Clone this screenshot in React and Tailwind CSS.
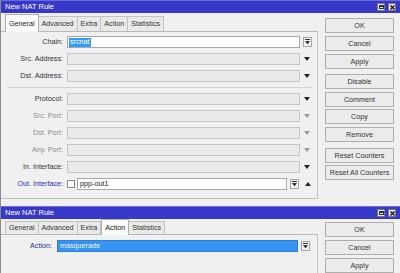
import React from 'react';

const Down = ({ color = '#222' }) => (
    <svg width="6" height="4" viewBox="0 0 6 4"><path d="M0 0h6L3 4z" fill={color} /></svg>
);

const Up = ({ color = '#222' }) => (
    <svg width="6" height="4" viewBox="0 0 6 4"><path d="M0 4h6L3 0z" fill={color} /></svg>
);

const DropBox = ({ className = '' }) => (
    <div className={`w-[9px] h-[10px] border border-[#a4a4a4] bg-[#f4f4f4] flex items-center justify-center ${className}`}>
        <svg width="5" height="6" viewBox="0 0 5 6"><path d="M0 0h5v1H0z M0 2h5L2.5 5.5z" fill="#333" /></svg>
    </div>
);

const TitleBar = () => (
    <div className="h-[13px] flex items-center justify-between bg-[#3838c8] border-t border-[#6b6bdc] pl-[4px] pr-[4px]">
        <span className="text-white text-[7.5px]">New NAT Rule</span>
        <div className="flex items-center gap-[3px]">
            <div className="w-[8px] h-[8px] bg-[#e4e4e4] border border-[#7a7a7a] flex items-center justify-center">
                <div className="w-[5px] h-[4px] border border-[#333] border-t-2"></div>
            </div>
            <div className="w-[8px] h-[8px] bg-[#e4e4e4] border border-[#7a7a7a] flex items-center justify-center">
                <svg width="5" height="5" viewBox="0 0 5 5"><path d="M0.5 0.5L4.5 4.5M4.5 0.5L0.5 4.5" stroke="#111" strokeWidth="1.3" /></svg>
            </div>
        </div>
    </div>
);

const Tabs = ({ active, tall }) => {
    const tabs = ['General', 'Advanced', 'Extra', 'Action', 'Statistics'];
    return (
        <div className={`flex items-end pl-[4px] border-b border-[#b8b8b8] ${tall ? 'h-[19px]' : 'h-[16px]'}`}>
            {tabs.map((t) =>
                t === active ? (
                    <div key={t} className={`relative -mb-px z-10 px-[3px] bg-[#fbfbfb] border border-b-0 border-[#b0b0b0] flex items-center text-[#222] ${tall ? 'h-[18px]' : 'h-[16px]'}`}>
                        {t}
                    </div>
                ) : (
                    <div key={t} className={`px-[3px] bg-[#e9e9e9] border border-b-0 border-[#c2c2c2] -ml-px first:ml-0 flex items-center text-[#333] ${tall ? 'h-[15px]' : 'h-[13px]'}`}>
                        {t}
                    </div>
                )
            )}
        </div>
    );
};

const Button = ({ children, className = '' }) => (
    <div className={`w-[69px] h-[15px] bg-[#ebebeb] border border-[#adadad] flex items-center justify-center text-[#333] ${className}`}>
        {children}
    </div>
);

const Row = ({ label, labelColor = 'text-[#333]', arrow = 'dark', white }) => (
    <div className="h-[12px] flex items-center">
        <div className={`w-[62px] mr-[4px] text-right ${labelColor}`}>{label}</div>
        <div className={`w-[233px] h-[12px] border ${white ? 'bg-white border-[#a8a8a8]' : 'bg-[#eaeaea] border-[#c6c6c6]'}`}></div>
        <div className="w-[14px] flex justify-center">
            {arrow === 'box' ? <DropBox /> : <Down color={arrow === 'dark' ? '#222' : '#9a9a9a'} />}
        </div>
    </div>
);

export default function App() {
    return (
        <div className="w-[400px] h-[273px] overflow-hidden bg-[#f0f0f0] font-['Liberation_Sans',Arial,sans-serif] text-[7.2px] leading-none">
            {/* first window */}
            <div className="h-[206px] flex flex-col border-l border-[#8c8c8c]">
                <TitleBar />
                <div className="flex-1 flex">
                    <div className="w-[317px] flex flex-col">
                        <Tabs active="General" tall />
                        <div className="h-[167px] border-r border-b border-[#c4c4c4] flex flex-col gap-[5px] pt-[4px]">
                            <div className="h-[12px] flex items-center">
                                <div className="w-[62px] mr-[4px] text-right text-[#333]">Chain:</div>
                                <div className="w-[233px] h-[12px] border bg-white border-[#a8a8a8] flex items-center pl-[1px]">
                                    <span className="bg-[#3399ff] text-white px-[1px] h-[9px] flex items-center">srcnat</span>
                                </div>
                                <div className="w-[14px] flex justify-center"><DropBox /></div>
                            </div>
                            <Row label="Src. Address:" />
                            <Row label="Dst. Address:" />
                            <div className="h-px bg-[#d2d2d2] mx-[6px]"></div>
                            <Row label="Protocol:" />
                            <Row label="Src. Port:" labelColor="text-[#8c8c8c]" arrow="gray" />
                            <Row label="Dst. Port:" labelColor="text-[#8c8c8c]" arrow="gray" />
                            <Row label="Any. Port:" labelColor="text-[#8c8c8c]" arrow="gray" />
                            <Row label="In. Interface:" />
                            <div className="h-[12px] flex items-center">
                                <div className="w-[62px] mr-[4px] text-right text-[#2c2cb0]">Out. Interface:</div>
                                <div className="w-[8px] h-[8px] bg-white border border-[#8a8a8a] mr-[2px]"></div>
                                <div className="w-[210px] h-[12px] border bg-white border-[#a8a8a8] flex items-center pl-[2px] text-[#222]">ppp-out1</div>
                                <DropBox className="ml-[3px]" />
                                <div className="ml-[6px]"><Up /></div>
                            </div>
                        </div>
                    </div>
                    <div className="flex-1 flex flex-col pl-[7px] pt-[5px]">
                        <Button>OK</Button>
                        <Button className="mt-[3px]">Cancel</Button>
                        <Button className="mt-[3px]">Apply</Button>
                        <Button className="mt-[5px]">Disable</Button>
                        <Button className="mt-[3px]">Comment</Button>
                        <Button className="mt-[2px]">Copy</Button>
                        <Button className="mt-[3px]">Remove</Button>
                        <Button className="mt-[6px]">Reset Counters</Button>
                        <Button className="mt-[2px]">Reset All Counters</Button>
                    </div>
                </div>
            </div>

            {/* second window */}
            <div className="h-[67px] flex flex-col border-l border-[#8c8c8c]">
                <TitleBar />
                <div className="flex-1 flex">
                    <div className="w-[317px] flex flex-col">
                        <Tabs active="Action" />
                        <div className="flex-1 border-r border-[#c4c4c4] pt-[5px]">
                            <div className="h-[12px] flex items-center">
                                <div className="w-[51px] mr-[5px] text-right text-[#2c2c90]">Action:</div>
                                <div className="w-[241px] h-[12px] border border-[#2f7fd8] bg-[#3694f2] flex items-center pl-[2px] text-[#eef6ff]">masquerade</div>
                                <DropBox className="ml-[3px]" />
                            </div>
                        </div>
                    </div>
                    <div className="flex-1 flex flex-col pl-[7px] pt-[3px]">
                        <Button>OK</Button>
                        <Button className="mt-[3px]">Cancel</Button>
                        <Button className="mt-[3px]">Apply</Button>
                    </div>
                </div>
            </div>
        </div>
    );
}
